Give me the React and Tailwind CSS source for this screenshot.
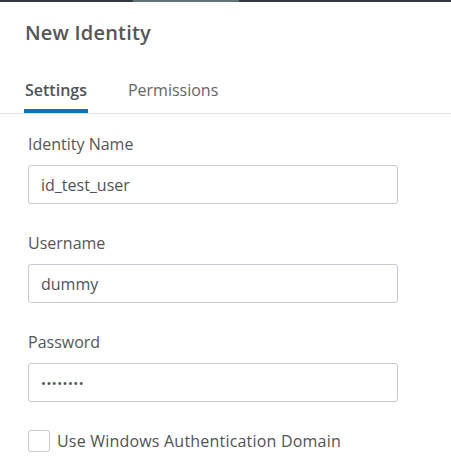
import React, { useState } from 'react';

const fields = [
  { label: 'Identity Name', value: 'id_test_user', type: 'text' },
  { label: 'Username', value: 'dummy', type: 'text' },
  { label: 'Password', value: 'password', type: 'password' },
];

const App = () => {
  const [tab, setTab] = useState('settings');
  const [useDomain, setUseDomain] = useState(false);

  return (
    <div className="w-[451px] h-[474px] bg-white overflow-hidden" style={{ fontFamily: '"Open Sans", Lato, sans-serif' }}>
      <div className="flex h-[2px]">
        <div className="w-[133px] bg-[#333a42]" />
        <div className="w-[106px] bg-[#627378]" />
        <div className="flex-1 bg-[#333a42]" />
      </div>

      <h1 className="pl-[25px] pt-[17px] text-[20px] leading-[28px] font-semibold tracking-[0.2px] text-[#565656]">New Identity</h1>

      <div className="mt-[31px] flex gap-[40px] pl-[24px] border-b border-[#dde3e7]">
        <button
          className={`pb-[7px] text-[16px] leading-[24px] border-b-[4px] ${tab === 'settings' ? 'border-[#0079b8] text-[#4f5358] font-semibold' : 'border-transparent text-[#666]'}`}
          onClick={() => setTab('settings')}
        >
          <span className="px-[1px]">Settings</span>
        </button>
        <button
          className={`pb-[7px] text-[16px] leading-[24px] border-b-[4px] ${tab === 'permissions' ? 'border-[#0079b8] text-[#4f5358] font-semibold' : 'border-transparent text-[#666]'}`}
          onClick={() => setTab('permissions')}
        >
          Permissions
        </button>
      </div>

      <div className="pl-[28px] pt-[19px] w-[398px] flex flex-col gap-[28px]">
        {fields.map((f) => (
          <div key={f.label} className="flex flex-col gap-[10px]">
            <label className="text-[16px] leading-[22px] text-[#565656]">{f.label}</label>
            <input
              type={f.type}
              defaultValue={f.value}
              className={`h-[39px] w-full rounded-[3px] border border-[#c5ccd3] px-[12px] text-[#4f5358] outline-none ${f.type === 'password' ? 'text-[13px] tracking-[0.5px]' : 'text-[16px]'}`}
            />
          </div>
        ))}
      </div>

      <label className="mt-[28px] ml-[28px] flex items-center gap-[7px] cursor-pointer">
        <input type="checkbox" className="sr-only" checked={useDomain} onChange={() => setUseDomain(!useDomain)} />
        <span className={`w-[22px] h-[22px] rounded-[3px] border ${useDomain ? 'bg-[#0079b8] border-[#0079b8]' : 'border-[#c5ccd3] bg-white'}`} />
        <span className="text-[16px] leading-[22px] tracking-[0.2px] text-[#4f5358]">Use Windows Authentication Domain</span>
      </label>
    </div>
  );
};

export default App;
